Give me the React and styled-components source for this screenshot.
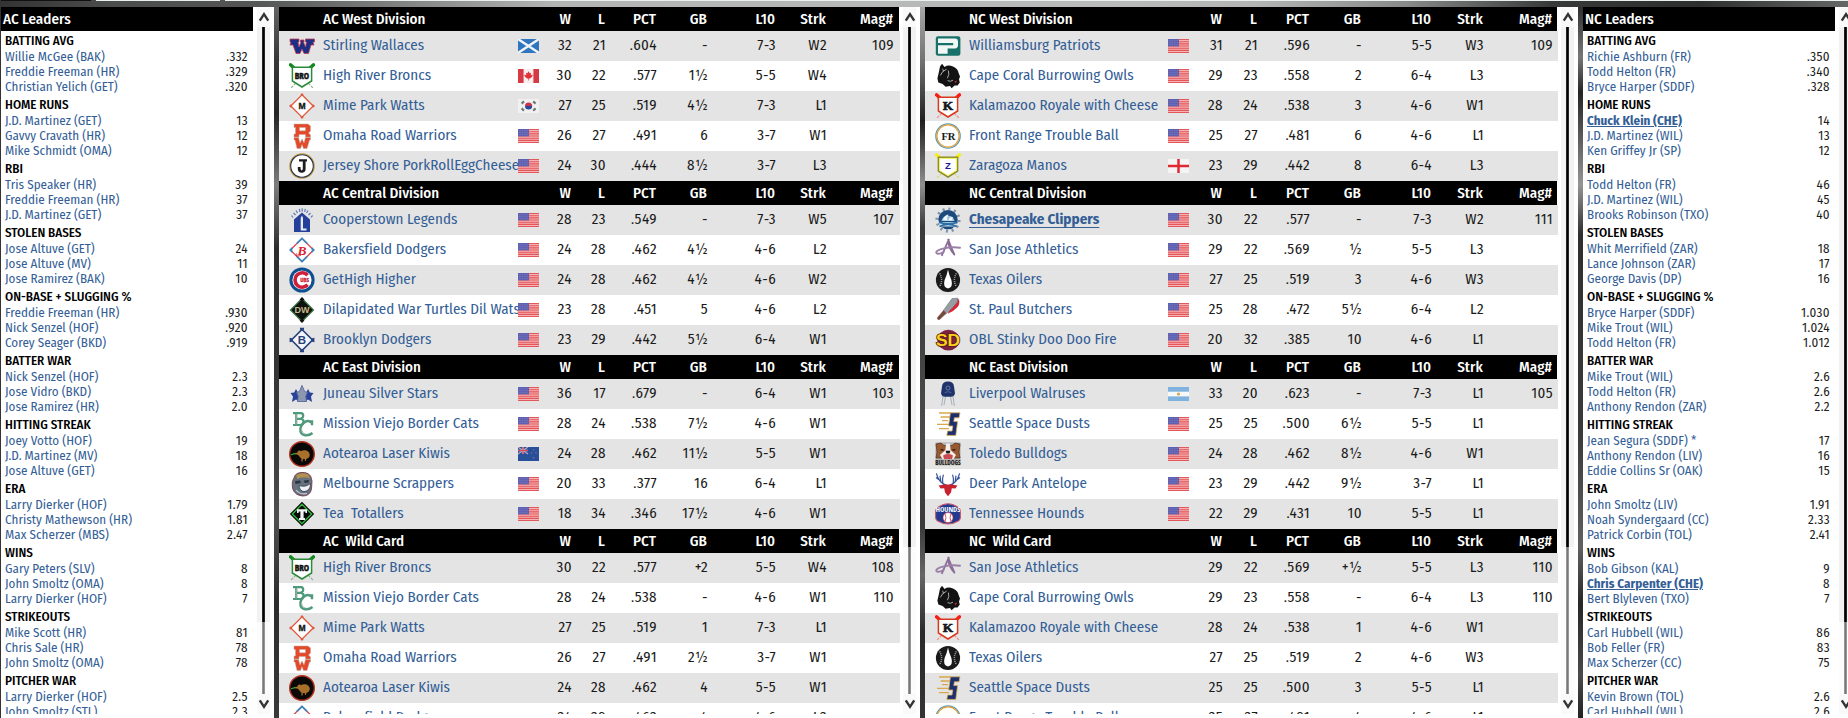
import React from "react";
import styled, { createGlobalStyle } from "styled-components";

const acLeaders = [
  { title: "BATTING AVG", rows: [["Willie McGee (BAK)", ".332"], ["Freddie Freeman (HR)", ".329"], ["Christian Yelich (GET)", ".320"]] },
  { title: "HOME RUNS", rows: [["J.D. Martinez (GET)", "13"], ["Gavvy Cravath (HR)", "12"], ["Mike Schmidt (OMA)", "12"]] },
  { title: "RBI", rows: [["Tris Speaker (HR)", "39"], ["Freddie Freeman (HR)", "37"], ["J.D. Martinez (GET)", "37"]] },
  { title: "STOLEN BASES", rows: [["Jose Altuve (GET)", "24"], ["Jose Altuve (MV)", "11"], ["Jose Ramirez (BAK)", "10"]] },
  { title: "ON-BASE + SLUGGING %", rows: [["Freddie Freeman (HR)", ".930"], ["Nick Senzel (HOF)", ".920"], ["Corey Seager (BKD)", ".919"]] },
  { title: "BATTER WAR", rows: [["Nick Senzel (HOF)", "2.3"], ["Jose Vidro (BKD)", "2.3"], ["Jose Ramirez (HR)", "2.0"]] },
  { title: "HITTING STREAK", rows: [["Joey Votto (HOF)", "19"], ["J.D. Martinez (MV)", "18"], ["Jose Altuve (GET)", "16"]] },
  { title: "ERA", rows: [["Larry Dierker (HOF)", "1.79"], ["Christy Mathewson (HR)", "1.81"], ["Max Scherzer (MBS)", "2.47"]] },
  { title: "WINS", rows: [["Gary Peters (SLV)", "8"], ["John Smoltz (OMA)", "8"], ["Larry Dierker (HOF)", "7"]] },
  { title: "STRIKEOUTS", rows: [["Mike Scott (HR)", "81"], ["Chris Sale (HR)", "78"], ["John Smoltz (OMA)", "78"]] },
  { title: "PITCHER WAR", rows: [["Larry Dierker (HOF)", "2.5"], ["John Smoltz (STL)", "2.3"]] },
];

const ncLeaders = [
  { title: "BATTING AVG", rows: [["Richie Ashburn (FR)", ".350"], ["Todd Helton (FR)", ".340"], ["Bryce Harper (SDDF)", ".328"]] },
  { title: "HOME RUNS", rows: [["Chuck Klein (CHE)", "14", true], ["J.D. Martinez (WIL)", "13"], ["Ken Griffey Jr (SP)", "12"]] },
  { title: "RBI", rows: [["Todd Helton (FR)", "46"], ["J.D. Martinez (WIL)", "45"], ["Brooks Robinson (TXO)", "40"]] },
  { title: "STOLEN BASES", rows: [["Whit Merrifield (ZAR)", "18"], ["Lance Johnson (ZAR)", "17"], ["George Davis (DP)", "16"]] },
  { title: "ON-BASE + SLUGGING %", rows: [["Bryce Harper (SDDF)", "1.030"], ["Mike Trout (WIL)", "1.024"], ["Todd Helton (FR)", "1.012"]] },
  { title: "BATTER WAR", rows: [["Mike Trout (WIL)", "2.6"], ["Todd Helton (FR)", "2.6"], ["Anthony Rendon (ZAR)", "2.2"]] },
  { title: "HITTING STREAK", rows: [["Jean Segura (SDDF) *", "17"], ["Anthony Rendon (LIV)", "16"], ["Eddie Collins Sr (OAK)", "15"]] },
  { title: "ERA", rows: [["John Smoltz (LIV)", "1.91"], ["Noah Syndergaard (CC)", "2.33"], ["Patrick Corbin (TOL)", "2.41"]] },
  { title: "WINS", rows: [["Bob Gibson (KAL)", "9"], ["Chris Carpenter (CHE)", "8", true], ["Bert Blyleven (TXO)", "7"]] },
  { title: "STRIKEOUTS", rows: [["Carl Hubbell (WIL)", "86"], ["Bob Feller (FR)", "83"], ["Max Scherzer (CC)", "75"]] },
  { title: "PITCHER WAR", rows: [["Kevin Brown (TOL)", "2.6"], ["Carl Hubbell (WIL)", "2.6"]] },
];

// logo, team, flag, W, L, PCT, GB, L10, Strk, Mag#
const acDivisions = [
  {
    title: "AC West Division",
    teams: [
      ["stirling", "Stirling Wallaces", "sco", "32", "21", ".604", "-", "7-3", "W2", "109"],
      ["broncs", "High River Broncs", "can", "30", "22", ".577", "1½", "5-5", "W4", ""],
      ["watts", "Mime Park Watts", "kor", "27", "25", ".519", "4½", "7-3", "L1", ""],
      ["omaha", "Omaha Road Warriors", "usa", "26", "27", ".491", "6", "3-7", "W1", ""],
      ["jersey", "Jersey Shore PorkRollEggCheese", "usa", "24", "30", ".444", "8½", "3-7", "L3", ""],
    ],
  },
  {
    title: "AC Central Division",
    teams: [
      ["legends", "Cooperstown Legends", "usa", "28", "23", ".549", "-", "7-3", "W5", "107"],
      ["bakersfield", "Bakersfield Dodgers", "usa", "24", "28", ".462", "4½", "4-6", "L2", ""],
      ["gethigh", "GetHigh Higher", "usa", "24", "28", ".462", "4½", "4-6", "W2", ""],
      ["turtles", "Dilapidated War Turtles Dil Wats", "usa", "23", "28", ".451", "5", "4-6", "L2", ""],
      ["brooklyn", "Brooklyn Dodgers", "usa", "23", "29", ".442", "5½", "6-4", "W1", ""],
    ],
  },
  {
    title: "AC East Division",
    teams: [
      ["juneau", "Juneau Silver Stars", "usa", "36", "17", ".679", "-", "6-4", "W1", "103"],
      ["cats", "Mission Viejo Border Cats", "usa", "28", "24", ".538", "7½", "4-6", "W1", ""],
      ["kiwis", "Aotearoa Laser Kiwis", "nzl", "24", "28", ".462", "11½", "5-5", "W1", ""],
      ["scrappers", "Melbourne Scrappers", "usa", "20", "33", ".377", "16", "6-4", "L1", ""],
      ["tea", "Tea  Totallers", "usa", "18", "34", ".346", "17½", "4-6", "W1", ""],
    ],
  },
  {
    title: "AC  Wild Card",
    teams: [
      ["broncs", "High River Broncs", "", "30", "22", ".577", "+2", "5-5", "W4", "108"],
      ["cats", "Mission Viejo Border Cats", "", "28", "24", ".538", "-", "4-6", "W1", "110"],
      ["watts", "Mime Park Watts", "", "27", "25", ".519", "1", "7-3", "L1", ""],
      ["omaha", "Omaha Road Warriors", "", "26", "27", ".491", "2½", "3-7", "W1", ""],
      ["kiwis", "Aotearoa Laser Kiwis", "", "24", "28", ".462", "4", "5-5", "W1", ""],
      ["bakersfield", "Bakersfield Dodgers", "", "24", "28", ".462", "4", "4-6", "L2", ""],
    ],
  },
];

const ncDivisions = [
  {
    title: "NC West Division",
    teams: [
      ["patriots", "Williamsburg Patriots", "usa", "31", "21", ".596", "-", "5-5", "W3", "109"],
      ["owls", "Cape Coral Burrowing Owls", "usa", "29", "23", ".558", "2", "6-4", "L3", ""],
      ["kalamazoo", "Kalamazoo Royale with Cheese", "usa", "28", "24", ".538", "3", "4-6", "W1", ""],
      ["frontrange", "Front Range Trouble Ball", "usa", "25", "27", ".481", "6", "4-6", "L1", ""],
      ["zaragoza", "Zaragoza Manos", "eng", "23", "29", ".442", "8", "6-4", "L3", ""],
    ],
  },
  {
    title: "NC Central Division",
    teams: [
      ["clippers", "Chesapeake Clippers", "usa", "30", "22", ".577", "-", "7-3", "W2", "111", true],
      ["athletics", "San Jose Athletics", "usa", "29", "22", ".569", "½", "5-5", "L3", ""],
      ["oilers", "Texas Oilers", "usa", "27", "25", ".519", "3", "4-6", "W3", ""],
      ["butchers", "St. Paul Butchers", "usa", "25", "28", ".472", "5½", "6-4", "L2", ""],
      ["stinky", "OBL Stinky Doo Doo Fire", "usa", "20", "32", ".385", "10", "4-6", "L1", ""],
    ],
  },
  {
    title: "NC East Division",
    teams: [
      ["walruses", "Liverpool Walruses", "arg", "33", "20", ".623", "-", "7-3", "L1", "105"],
      ["seattle", "Seattle Space Dusts", "usa", "25", "25", ".500", "6½", "5-5", "L1", ""],
      ["bulldogs", "Toledo Bulldogs", "usa", "24", "28", ".462", "8½", "4-6", "W1", ""],
      ["antelope", "Deer Park Antelope", "usa", "23", "29", ".442", "9½", "3-7", "L1", ""],
      ["hounds", "Tennessee Hounds", "usa", "22", "29", ".431", "10", "5-5", "L1", ""],
    ],
  },
  {
    title: "NC  Wild Card",
    teams: [
      ["athletics", "San Jose Athletics", "", "29", "22", ".569", "+½", "5-5", "L3", "110"],
      ["owls", "Cape Coral Burrowing Owls", "", "29", "23", ".558", "-", "6-4", "L3", "110"],
      ["kalamazoo", "Kalamazoo Royale with Cheese", "", "28", "24", ".538", "1", "4-6", "W1", ""],
      ["oilers", "Texas Oilers", "", "27", "25", ".519", "2", "4-6", "W3", ""],
      ["seattle", "Seattle Space Dusts", "", "25", "25", ".500", "3", "5-5", "L1", ""],
      ["frontrange", "Front Range Trouble Ball", "", "25", "27", ".481", "4", "4-6", "L1", ""],
    ],
  },
];

const headings = ["W", "L", "PCT", "GB", "L10", "Strk", "Mag#"];

const T = ({ x = 13, y, size, fill, font = "Liberation Sans", children, ...rest }) => (
  <text x={x} y={y} fontSize={size} fill={fill} fontFamily={`"${font}", sans-serif`} fontWeight="bold" textAnchor="middle" {...rest}>
    {children}
  </text>
);

// home plate shield with two crossed bats behind it
const Plate = ({ line, knob, bat, children }) => (
  <>
    <path d="M2 3L24 25M24 3L2 25" stroke={bat} strokeWidth="1.1" strokeDasharray="3 1" />
    <path d="M1.5 1.8L5 5M24.5 1.8L21 5" stroke={knob} strokeWidth="3.4" strokeLinecap="round" />
    <path d="M3.4 4.2H22.6V18L13 24L3.4 18Z" fill="#fff" stroke={line} strokeWidth="1.5" />
    {children}
  </>
);

const logos = {
  stirling: (
    <path d="M1 6H10V9H9L10 14L12 9H11.5V7H15V9H14.5L16.5 14L17.5 9H16.5V6H25.5V9H24L25 12L22 12L19.5 20.5H15L13 16L11 20.5H7L4 12L1 12L2 9H1Z" fill="#1b2f86" stroke="#c43c4c" strokeWidth="0.8" />
  ),
  broncs: (
    <Plate line="#2c8a3a" knob="#108a1c" bat="#8fae8f">
      <T y="15.6" size="9" fill="#111" font="Open Sans Condensed" stroke="#111" strokeWidth="0.5">BRO</T>
    </Plate>
  ),
  watts: (
    <>
      <path d="M13 1.8L24.2 13L13 24.2L1.8 13Z" fill="#fdfdfd" stroke="#e0573a" strokeWidth="1.3" />
      <path d="M13 0L15 2.2H11ZM26 13L23.8 15V11ZM13 26L11 23.8H15ZM0 13L2.2 11V15Z" fill="#e0573a" />
      <T y="16.2" size="8.6" fill="#111" font="Liberation Sans" stroke="#111" strokeWidth="0.3">M</T>
    </>
  ),
  omaha: (
    <g fill="#e4492a" stroke="#b9a9a2" strokeWidth="0.5">
      <path d="M5 1H19L21.5 3V8L19.5 10L21.5 12V14H16.5V11.5H10V14H5V11H6.5V4.5H5ZM10.5 4.5V7.8H16.5V4.5Z" fillRule="evenodd" />
      <path d="M5 14.5H9.5L11 20L13 16L15 20L16.5 14.5H21.5V17H20.5L18 25.5H14.5L13 21.5L11.5 25.5H8L6 17H5Z" />
    </g>
  ),
  jersey: (
    <>
      <circle cx="13" cy="13" r="12.2" fill="#fff" stroke="#c99a2e" strokeWidth="1.2" />
      <circle cx="13" cy="13" r="11.3" fill="none" stroke="#26324f" strokeWidth="1.1" />
      <path d="M10 6.2H18V8.4H16.6V16Q16.6 19.8 12.6 19.8Q9 19.8 8.8 16V14H11.6V16Q11.8 17.4 12.7 17.4Q13.8 17.2 13.8 15.6V8.4H10Z" fill="#1c1c22" />
    </>
  ),
  legends: (
    <>
      <path d="M13 5.5L21 12.5V25H5V12.5Z" fill="#24409a" />
      <path d="M11.7 11L13 8.5L14 11V21.5H17.5V23.5H11.7Z" fill="#e6ebf7" />
      <path d="M2.5 8.5L4 10.5M4.5 6L6.5 8M7 3.5L8.5 6M10.3 1.8L11 4.8M13.2 1.2V4.4M16.4 1.8L15.6 4.8M19 3.5L17.5 6M21.5 6L19.5 8M23.6 8.5L22 10.3" stroke="#5c76b8" strokeWidth="1.2" />
    </>
  ),
  bakersfield: (
    <>
      <path d="M13 1.4L24.6 13L13 24.6L1.4 13Z" fill="#fff" stroke="#d8404a" strokeWidth="1.3" />
      <path d="M8 6.4L13 1.4L18 6.4M8 19.6L13 24.6L18 19.6M3.4 11L1.4 13L3.4 15M22.6 11L24.6 13L22.6 15" fill="none" stroke="#3a86bd" strokeWidth="1.8" />
      <T y="17.8" size="13.5" fill="#d8232f" font="Liberation Serif" fontStyle="italic">B</T>
      <path d="M7.5 16.5C6 19 9 20 12 18" fill="none" stroke="#d8232f" strokeWidth="1" />
    </>
  ),
  gethigh: (
    <>
      <circle cx="13" cy="13" r="12.6" fill="#0e4f8f" />
      <circle cx="13" cy="13" r="9.6" fill="#fff" />
      <path d="M18.6 8.2A7.2 7.2 0 1 0 18.6 17.8" fill="none" stroke="#cf1f3b" strokeWidth="3.6" />
      <T x="15.6" y="15.2" size="6" fill="#cf1f3b" font="Open Sans Condensed" stroke="#cf1f3b" strokeWidth="0.3">UBS</T>
    </>
  ),
  turtles: (
    <>
      <path d="M13 0.6L25.4 13L13 25.4L0.6 13Z" fill="#3f7245" />
      <path d="M13 2.4L23.6 13L13 23.6L2.4 13Z" fill="#0c120d" />
      <path d="M13 0L15.4 2.4L13 4.4L10.6 2.4ZM13 26L15.4 23.6L13 21.6L10.6 23.6Z" fill="#111" />
      <T y="16.2" size="9" fill="#c9b98a">DW</T>
    </>
  ),
  brooklyn: (
    <>
      <path d="M13 2.5L23.5 13L13 23.5L2.5 13Z" fill="#f3f5fa" stroke="#27427c" strokeWidth="1.6" />
      <path d="M10.8 0.8H15.2L14.6 3.8H11.4ZM10.8 25.2H15.2L14.6 22.2H11.4ZM0.6 10.8V15.2L3.8 14.6V11.4ZM25.4 10.8V15.2L22.2 14.6V11.4Z" fill="#27427c" />
      <T y="17" size="11.5" fill="#27427c">B</T>
    </>
  ),
  juneau: (
    <>
      <path d="M7 8L8.8 11.6L12 12L9.8 15L11 21L7 18.5L3 21L4 15.4L1.5 12L5.2 11.6ZM19 8L20.8 11.6L24.5 12L22 15.4L23 21L19 18.5L15 21L16.2 15L14 12L17.2 11.6Z" fill="#2b429a" />
      <path d="M13 4.4L15.6 10.4L18.5 11.5L16.8 15.2L17.6 20.5H8.4L9.2 15.2L7.5 11.5L10.4 10.4Z" fill="#8b98b0" stroke="#4e609b" strokeWidth="0.8" />
    </>
  ),
  cats: (
    <g fill="none" stroke="#4f9a7c">
      <path d="M4 2.2H12Q14.4 2.4 14.2 5Q14 7.2 11.5 7.6Q14.8 8 14.6 11Q14.4 14 11 14H4M7.2 2.2V14M7 7.8H12" strokeWidth="2.2" />
      <path d="M23 9.2V14.2M23 12Q20 8.8 16.4 10.6Q12.2 13 11.4 17.8Q11 23.4 16 24.2Q20.4 24.6 23.5 22" strokeWidth="2.4" />
      <path d="M7.2 3V13.5M12.6 17Q12.6 22.4 17 23.2" stroke="#a9b9b2" strokeWidth="0.9" />
    </g>
  ),
  kiwis: (
    <>
      <circle cx="13" cy="13" r="12.3" fill="#0b0908" stroke="#b53220" strokeWidth="1.4" />
      <path d="M4.8 13L8.4 11.4C9 9.4 10.8 9 12 10.2C14 8.8 18 8.8 20 11.4C21.6 14 20.4 17 17.4 17.8L17 20H16L15.8 18L13.8 18L13.6 20.6H12.4L12.4 17.4C10.4 16.4 10.2 14.6 8.8 13.8Z" fill="#a8702a" />
      <path d="M2 13.8L6.6 12.4" stroke="#2fae3c" strokeWidth="1.1" />
    </>
  ),
  scrappers: (
    <>
      <path d="M5 7Q6 2 12 1.5Q19 0.8 21.8 5.5L23 10L22.5 18Q21 25 14 25Q6 24.5 3.8 18Q2.2 11 5 7Z" fill="#66727f" stroke="#7a3b4c" strokeWidth="0.9" />
      <path d="M7.5 4Q12 0.8 19 3.4L21 7.4Q14 4.8 8 8Z" fill="#b5914b" />
      <path d="M6 10L11 9.5L12 12L6.5 13ZM15 9.5L20 9L19.5 11.5L15.5 12Z" fill="#2c3541" />
      <path d="M10 14.5Q16 16.8 21.5 12.5Q21.6 20 15 20.6Q10.5 20 10 14.5Z" fill="#eef1f4" stroke="#333f4c" strokeWidth="0.8" />
      <path d="M7 19Q11 24 18 22.5" fill="none" stroke="#c9d0d8" strokeWidth="1.2" />
    </>
  ),
  tea: (
    <>
      <path d="M13 0.8L25.2 13L13 25.2L0.8 13Z" fill="#0b0f0b" />
      <path d="M13 3.4L22.6 13L13 22.6L3.4 13Z" fill="none" stroke="#2fc43f" strokeWidth="1.2" />
      <path d="M13 5L21 13L13 21L5 13Z" fill="#0a0a0a" />
      <path d="M8 8.2H18V12H16.4V10.6H14.6V17H16V19H10V17H11.4V10.6H9.6V12H8Z" fill="#f4f4f4" />
    </>
  ),
  patriots: (
    <>
      <rect x="0.8" y="3.2" width="24.6" height="19.6" rx="2.4" fill="#17716a" />
      <path d="M3 5.6H20.6Q23 5.8 23 8.4V12.6Q22.8 15.4 20 15.4H12.6V20.8H3V12.2H18.2V10H3Z" fill="#f1f7f5" />
    </>
  ),
  owls: (
    <>
      <path d="M7 0.8L9.6 4Q13 1.4 18 3.4Q23 5.8 23.6 10L25 13.4L24 16.4L24.8 19.4L22.6 22.4L19.6 22.6L16.6 25.2L15 23L10.6 23.8L7.6 21L3.4 19.6L2.4 15.4L3.8 9.6L5 3.4Z" fill="#141313" />
      <path d="M5.4 12.4Q6.8 8 11.6 6.2M7.6 5.8L8.6 8.6M13.4 7.6Q14.6 11.8 12.4 15.2M12.6 17.6Q15.4 19.2 18 17.2" fill="none" stroke="#b9b9b9" strokeWidth="0.9" />
      <path d="M19.4 18.2L22 17.8L20.6 20.2Z" fill="#cf2c2c" />
    </>
  ),
  kalamazoo: (
    <Plate line="#d8381e" knob="#ff1c14" bat="#f08a80">
      <T y="17.4" size="13.4" fill="#15151c" font="Liberation Serif" stroke="#15151c" strokeWidth="0.6">K</T>
    </Plate>
  ),
  frontrange: (
    <>
      <circle cx="13" cy="13" r="12.2" fill="#fdfdfb" stroke="#5d9bb4" strokeWidth="1.3" />
      <circle cx="13" cy="13" r="11.1" fill="none" stroke="#e0a040" strokeWidth="1.2" />
      <T x="13.4" y="16.6" size="10.5" fill="#161616" font="Liberation Serif">FR</T>
    </>
  ),
  zaragoza: (
    <Plate line="#8b8c2a" knob="#f6ef1a" bat="#d9d36a">
      <path d="M4.6 5.4H21.4V17.4L13 22.6L4.6 17.4Z" fill="none" stroke="#eef04a" strokeWidth="0.9" />
      <T y="15.6" size="9.6" fill="#1c1c96">Z</T>
    </Plate>
  ),
  clippers: (
    <>
      <circle cx="13" cy="13" r="11" fill="none" stroke="#7b93ab" strokeWidth="3.2" strokeDasharray="2 3.76" />
      <circle cx="13" cy="12.6" r="9.6" fill="#1c4a7c" />
      <path d="M6.4 14A6.8 6.8 0 0 1 19.6 14Z" fill="#9cc4df" />
      <path d="M8 13Q9.5 8 13.5 7.6Q11.4 11 12.4 13.4ZM13.6 13.4Q14 9.6 18 10Q16.4 12 17.6 13.4Z" fill="#eef6fb" />
      <path d="M3.6 15H22.4L21 19.4H5Z" fill="#cfe2ee" />
      <path d="M4 15.4Q13 18 22.6 15.4M4.5 19.6Q13 15 21.6 19.6" stroke="#2f6ea5" strokeWidth="1.7" fill="none" />
    </>
  ),
  athletics: (
    <>
      <path d="M13.8 2.6Q10 11 7 18.2M13.2 2.6Q16 10 19.2 17M13.4 5Q14 12 19.4 17.6" fill="none" stroke="#8a6c97" strokeWidth="1.8" strokeLinecap="round" />
      <path d="M25 10.8Q17 9.6 9 11.4Q1.2 13.2 1.2 15.6Q1.6 17.6 6.4 16.2L8.6 15" fill="none" stroke="#9a80a6" strokeWidth="1.9" strokeLinecap="round" />
    </>
  ),
  oilers: (
    <>
      <circle cx="13" cy="13" r="12.1" fill="#1b1a1a" />
      <path d="M13 2.6Q14 8 16.4 13Q18.4 20.4 13 21.6Q7.6 20.4 9.6 13Q12 8 13 2.6Z" fill="#fff" />
      <path d="M4.6 6.4Q8.6 13 4.6 19.6M21.4 6.4Q17.4 13 21.4 19.6" fill="none" stroke="#a4a4a4" strokeWidth="1.5" strokeDasharray="1 1" />
    </>
  ),
  butchers: (
    <>
      <path d="M23 1.5Q26 5 22.6 10Q18 15 12.6 16.8L17 8Z" fill="#dc2233" />
      <path d="M17 1.6L22.8 1.2L22.4 5Q17.6 11.8 10.8 16.8L8.4 13.4Z" fill="#979da3" stroke="#6c7278" strokeWidth="0.6" />
      <path d="M8.6 13.4L11 16.6L4.4 22.6Q2.4 23 2.4 20.8Z" fill="#6d4a3a" stroke="#8d4b4b" strokeWidth="0.7" />
    </>
  ),
  stinky: (
    <>
      <ellipse cx="13.4" cy="13.2" rx="11" ry="10.4" fill="#7c2340" />
      <T y="19.2" size="17.4" fill="#f8d21c" stroke="#5b1a22" strokeWidth="1.6" paintOrder="stroke">SD</T>
    </>
  ),
  walruses: (
    <>
      <path d="M8.4 13L6.6 25M17.6 13L19.4 25M10.6 15L9 24M15.4 15L17 24" stroke="#a9b4bd" strokeWidth="1.1" />
      <path d="M13 0.6Q18.6 0.6 19 5.6L20 12.4Q19 15.6 16 15.8H10Q7 15.6 6 12.4L7 5.6Q7.4 0.6 13 0.6Z" fill="#20346b" />
      <circle cx="13" cy="7" r="2" fill="none" stroke="#8295c4" strokeWidth="0.7" />
      <path d="M9.6 11.6Q13 9.8 16.4 11.6" stroke="#5b70a8" strokeWidth="0.8" fill="none" />
    </>
  ),
  seattle: (
    <>
      <path d="M4 2H16M5.6 6H15M7 9.6H13M2 13.4H15M4 17.6H14" stroke="#d9a84a" strokeWidth="1.3" />
      <path d="M25 1.8L24 6.8H19.4L18.8 10.6H22.6L20.8 24.4H11.8L12.6 20H17L17.8 15H13.6L15.4 1.8Z" fill="#1d2f6f" stroke="#dcae54" strokeWidth="0.8" />
    </>
  ),
  bulldogs: (
    <>
      <path d="M0.4 1.4H25.6V24.4H0.4Z" fill="#b6b4b2" />
      <path d="M1 3L6 2L9 4.6H17L20 2L25 3L24 11L25 17H1L2 11Z" fill="#99592f" stroke="#4a3024" strokeWidth="0.7" />
      <path d="M11 2.6H15L15.6 9L21 14L18.6 18H7.4L5 14L10.4 9Z" fill="#f3efec" />
      <path d="M10.6 9.8H15.4L14.6 12.6H11.4Z" fill="#1c1716" />
      <path d="M8 14.4Q13 11.6 18 14.4L17 18H9Z" fill="#c94b50" />
      <path d="M5.6 8.6L8.6 9.2M20.4 8.6L17.4 9.2" stroke="#1c1716" strokeWidth="1.3" />
      <T y="23.8" size="6.4" fill="#15120f" font="Open Sans Condensed">BULLDOGS</T>
    </>
  ),
  antelope: (
    <>
      <path d="M12 14.6Q8 13.6 5 10Q2.2 6.4 1.4 2.4M4.4 9L1 6.4M7.8 12.4Q7.2 7 8.4 3.6M5.8 10.6L5 4.6M14 14.6Q18 13.6 21 10Q23.8 6.4 24.6 2.4M21.6 9L25 6.4M18.2 12.4Q18.8 7 17.6 3.6M20.2 10.6L21 4.6" fill="none" stroke="#34539b" strokeWidth="1.2" />
      <path d="M3.6 14.4L10 13.4H16L22.4 14.4L20.4 17.4L16.8 17.2L16 21.6L13 25.2L10 21.6L9.2 17.2L5.6 17.4Z" fill="#c8212f" />
    </>
  ),
  hounds: (
    <>
      <path d="M2.6 6.4Q13 -1 23.4 6.4Q25.4 8 25.4 10V17Q25 19 23.4 20Q13 26 2.6 20Q1 19 0.6 17V10Q0.8 8 2.6 6.4Z" fill="#213a8f" stroke="#c8566c" strokeWidth="1.1" />
      <T y="10.8" size="7.4" fill="#fff" font="Open Sans Condensed">HOUNDS</T>
      <circle cx="13" cy="16.6" r="5" fill="#fff" stroke="#c8333f" strokeWidth="0.6" />
      <path d="M10 12.8Q12 16.6 10 20.4M16 12.8Q14 16.6 16 20.4" fill="none" stroke="#d64450" strokeWidth="0.9" />
    </>
  ),
};

const flags = {
  usa: (
    <>
      <path d="M0 0H21V14H0Z" fill="#f6b3b3" />
      <path d="M0 0.5H21M0 2.7H21M0 4.9H21M0 7H21M0 9.2H21M0 11.4H21M0 13.5H21" stroke="#e3565a" strokeWidth="1.1" />
      <path d="M0 0H11V7.4H0Z" fill="#5f60b0" />
      <path d="M0.8 1.6H10.6M0.8 3.6H10.6M0.8 5.6H10.6" stroke="#8c8dcb" strokeWidth="0.6" strokeDasharray="0.8 0.9" />
    </>
  ),
  sco: (
    <>
      <path d="M0 0H21V14H0Z" fill="#2f76bd" />
      <path d="M0 0L21 14M21 0L0 14" stroke="#eef4fa" strokeWidth="2.4" />
    </>
  ),
  can: (
    <>
      <path d="M0 0H21V14H0Z" fill="#f7eeee" />
      <path d="M0 0H5.6V14H0ZM15.4 0H21V14H15.4Z" fill="#d63a45" />
      <path d="M10.5 2.2L11.6 4.2L13 3.8L12.7 6.2L14.8 5.6L14.2 7.6L12 9.6L10.8 9.6V11.6H10.2V9.6L9 9.6L6.8 7.6L6.2 5.6L8.3 6.2L8 3.8L9.4 4.2Z" fill="#e23039" />
    </>
  ),
  kor: (
    <>
      <path d="M0 0H21V14H0Z" fill="#f1f1f1" />
      <path d="M7 7A3.6 3.6 0 0 1 14.2 7Z" fill="#c8324a" />
      <path d="M7 7A3.6 3.6 0 0 0 14.2 7Z" fill="#2b4a96" />
      <path d="M3.6 4.6L6 2.4M15.2 2.4L17.6 4.6M3.6 9.4L6 11.6M15.2 11.6L17.6 9.4" stroke="#777" strokeWidth="2.2" />
    </>
  ),
  nzl: (
    <>
      <path d="M0 0H21V14H0Z" fill="#27509b" />
      <path d="M0 0L10 7M10 0L0 7" stroke="#b9a6c2" strokeWidth="1.2" />
      <path d="M5 0V7M0 3.5H10" stroke="#e3a9b3" strokeWidth="1.6" />
      <path d="M5 0V7M0 3.5H10" stroke="#cf3a4a" strokeWidth="0.8" />
      <path d="M15.6 2.4V3.6M13.4 5.6V6.8M18 5V6.2M15.6 10V11.2" stroke="#b05c84" strokeWidth="1.2" />
    </>
  ),
  eng: (
    <>
      <path d="M0 0H21V14H0Z" fill="#f4f4f4" />
      <path d="M10.5 0V14M0 7H21" stroke="#e02a32" strokeWidth="2.5" />
    </>
  ),
  arg: (
    <>
      <path d="M0 0H21V14H0Z" fill="#7fb2de" />
      <path d="M0 4.7H21V9.4H0Z" fill="#f7f8f9" />
      <circle cx="10.5" cy="7" r="1.6" fill="#d6a64c" />
    </>
  ),
};

function ScrollBar({ thumb }) {
  return (
    <Scroll>
      <Arrow viewBox="0 0 13 20">
        <path d="M2.8 13.6L7 7.2L11.2 13.6" />
      </Arrow>
      <Thumb $h={thumb} />
      <Track />
      <Arrow viewBox="0 0 13 20">
        <path d="M2.8 6.4L7 12.8L11.2 6.4" />
      </Arrow>
    </Scroll>
  );
}

function Leaders({ title, groups }) {
  return (
    <Panel $w={252}>
      <Body>
        <LeadersHead>{title}</LeadersHead>
        {groups.map((group) => (
          <section key={group.title}>
            <Category>{group.title}</Category>
            {group.rows.map(([player, value, mine]) => (
              <LeaderRow key={player}>
                <Player href="#" $mine={mine}>{player}</Player>
                <Value>{value}</Value>
              </LeaderRow>
            ))}
          </section>
        ))}
      </Body>
      <ScrollBar thumb={595} />
    </Panel>
  );
}

function Standings({ width, columns, divisions }) {
  return (
    <Panel $w={width}>
      <Body>
        {divisions.map((division) => (
          <section key={division.title}>
            <DivisionHead $columns={columns}>
              <Title>{division.title}</Title>
              {headings.map((heading) => (
                <Heading key={heading}>{heading}</Heading>
              ))}
            </DivisionHead>
            {division.teams.map(([logo, team, flag, w, l, pct, gb, l10, strk, mag, mine]) => (
              <TeamRow key={team} $columns={columns}>
                <Logo viewBox="0 0 26 26">{logos[logo]}</Logo>
                <Team href="#" $mine={mine}>{team}</Team>
                <Flag viewBox="0 0 21 14">{flags[flag]}</Flag>
                <Value>{w}</Value>
                <Value>{l}</Value>
                <Value>{pct}</Value>
                <Value>{gb}</Value>
                <Value>{l10}</Value>
                <Value>{strk}</Value>
                <Value>{mag}</Value>
              </TeamRow>
            ))}
          </section>
        ))}
      </Body>
      <ScrollBar thumb={520} />
    </Panel>
  );
}

export default function App() {
  return (
    <Page>
      <GlobalStyle />
      <Menu>
        <MenuItem $w={90} $dark />
        <MenuItem $w={124} />
        <MenuItem />
      </Menu>
      <Board>
        <Leaders title="AC Leaders" groups={acLeaders} />
        <Gap $tone="#646464, #3a3a3a 7%, #262626 15%, #7d7d7d 25%, #2e2e2e 34%, #3a3a3a 60%, #505050 72%, #2c2c2c 84%, #3a3a3a" />
        <Standings width={620} columns="44px 195px 21px 33px 34px 51px 51px 68px 51px 67px" divisions={acDivisions} />
        <Gap $tone="#a6a6a6, #6f6f6f 8%, #1f1f1f 16%, #8f8f8f 25%, #3a3a3a 31%, #4a4a4a 60%, #3a3a3a 73%, #666 80%, #2a2a2a 88%, #343434" />
        <Standings width={632} columns="44px 199px 21px 34px 35px 52px 52px 70px 52px 69px" divisions={ncDivisions} />
        <Gap $tone="#2f2f2f, #777 7%, #242424 12%, #959595 25%, #2e2e2e 32%, #3a3a3a 60%, #606060 76%, #262626 84%, #4a4a4a 94%, #222" />
        <Leaders title="NC Leaders" groups={ncLeaders} />
      </Board>
    </Page>
  );
}

const GlobalStyle = createGlobalStyle`
  body {
    margin: 0;
    overflow: hidden;
    background: #3a3a3a;
    font-family: "Fira Sans Condensed", "Open Sans", sans-serif;
  }
`;

const Page = styled.div`
  height: 718px;
  display: flex;
  flex-direction: column;
  overflow: hidden;
  color: #1a1a1a;
  background: linear-gradient(90deg, #333 0, #4c4c4c 6%, #555 14%, #777 20%, #b4b4b4 30%, #bababa 60%, #b4b4b4 68%, #8a8a8a 76%, #383838 84%, #2e2e2e 92%, #666);
`;

const Menu = styled.div`
  display: flex;
  gap: 5px;
  height: 1px;
  margin: 0 0 6px 1px;
`;

const MenuItem = styled.div`
  flex: ${(p) => (p.$w ? `0 0 ${p.$w}px` : "1")};
  background: ${(p) => (p.$dark ? "#111" : "#eaf1ed")};
`;

const Board = styled.main`
  flex: 1;
  display: flex;
  min-height: 0;
  padding-left: 1px;
`;

const Gap = styled.div`
  flex: 0 0 5px;
  background: linear-gradient(180deg, ${(p) => p.$tone});
`;

const Panel = styled.div`
  flex: none;
  display: grid;
  grid-template-columns: ${(p) => p.$w}px 21px;
  background: #fff;
`;

const Body = styled.div`
  height: 707px;
  margin-right: -1px;
  overflow: hidden;
`;

const LeadersHead = styled.h2`
  margin: 0 1px 0 0;
  padding-left: 2px;
  height: 24px;
  line-height: 24px;
  font-size: 15px;
  font-weight: 500;
  color: #fff;
  background: #000;
`;

const Category = styled.h3`
  margin: 0;
  padding-left: 4px;
  height: 19px;
  line-height: 20px;
  font-size: 13px;
  font-weight: 500;
  color: #000;
`;

const LeaderRow = styled.div`
  display: flex;
  justify-content: space-between;
  height: 15px;
  line-height: 13px;
  padding: 0 6px 0 4px;
  font-size: 13px;
`;

const Player = styled.a`
  color: #335e96;
  letter-spacing: 0.03px;
  font-weight: ${(p) => (p.$mine ? 700 : 400)};
  text-decoration: ${(p) => (p.$mine ? "underline" : "none")};
`;

const Value = styled.span`
  letter-spacing: 0.4px;
`;

const Columns = styled.div`
  display: grid;
  grid-template-columns: ${(p) => p.$columns};
  text-align: right;
  font-size: 15px;
`;

const DivisionHead = styled(Columns)`
  height: 24px;
  line-height: 24px;
  margin-right: 1px;
  font-weight: 500;
  color: #fff;
  background: #000;
`;

const Title = styled.h2`
  grid-column: 2 / 4;
  margin: 0;
  font: inherit;
  text-align: left;
  white-space: pre;
`;

const Heading = styled.span`
  padding-right: 1px;
  letter-spacing: 0.1px;
`;

const TeamRow = styled(Columns)`
  height: 30px;
  line-height: 29px;

  &:nth-child(even) {
    background: #e4e4e4;
  }
`;

const Logo = styled.svg`
  width: 26px;
  height: 26px;
  margin: 2px 0 0 10px;
`;

const Team = styled.a`
  min-width: 0;
  overflow: hidden;
  text-align: left;
  white-space: pre;
  color: #335e96;
  letter-spacing: 0.02px;
  font-weight: ${(p) => (p.$mine ? 700 : 400)};
  text-decoration: ${(p) => (p.$mine ? "underline" : "none")};
  text-underline-offset: 3px;
`;

const Flag = styled.svg`
  width: 21px;
  height: 14px;
  margin-top: 8px;
`;

const Scroll = styled.div`
  display: flex;
  flex-direction: column;
  height: 707px;
  width: 13px;
  margin-left: 4px;
`;

const Arrow = styled.svg`
  flex: none;
  width: 13px;
  height: 20px;
  background: #f9f9f9;

  path {
    fill: none;
    stroke: #333;
    stroke-width: 2.4;
  }
`;

const Thumb = styled.div`
  flex: 0 0 ${(p) => p.$h}px;
  background: linear-gradient(90deg, #f2f2f2 5px, #444 5px, #000 6px, #000 7px, #444 8px, #f2f2f2 8px);
`;

const Track = styled.div`
  flex: 1;
  background: linear-gradient(90deg, #fcfcfc 5px, #b5b5b5 5px, #777 6px, #777 7px, #b5b5b5 8px, #fcfcfc 8px);
`;
